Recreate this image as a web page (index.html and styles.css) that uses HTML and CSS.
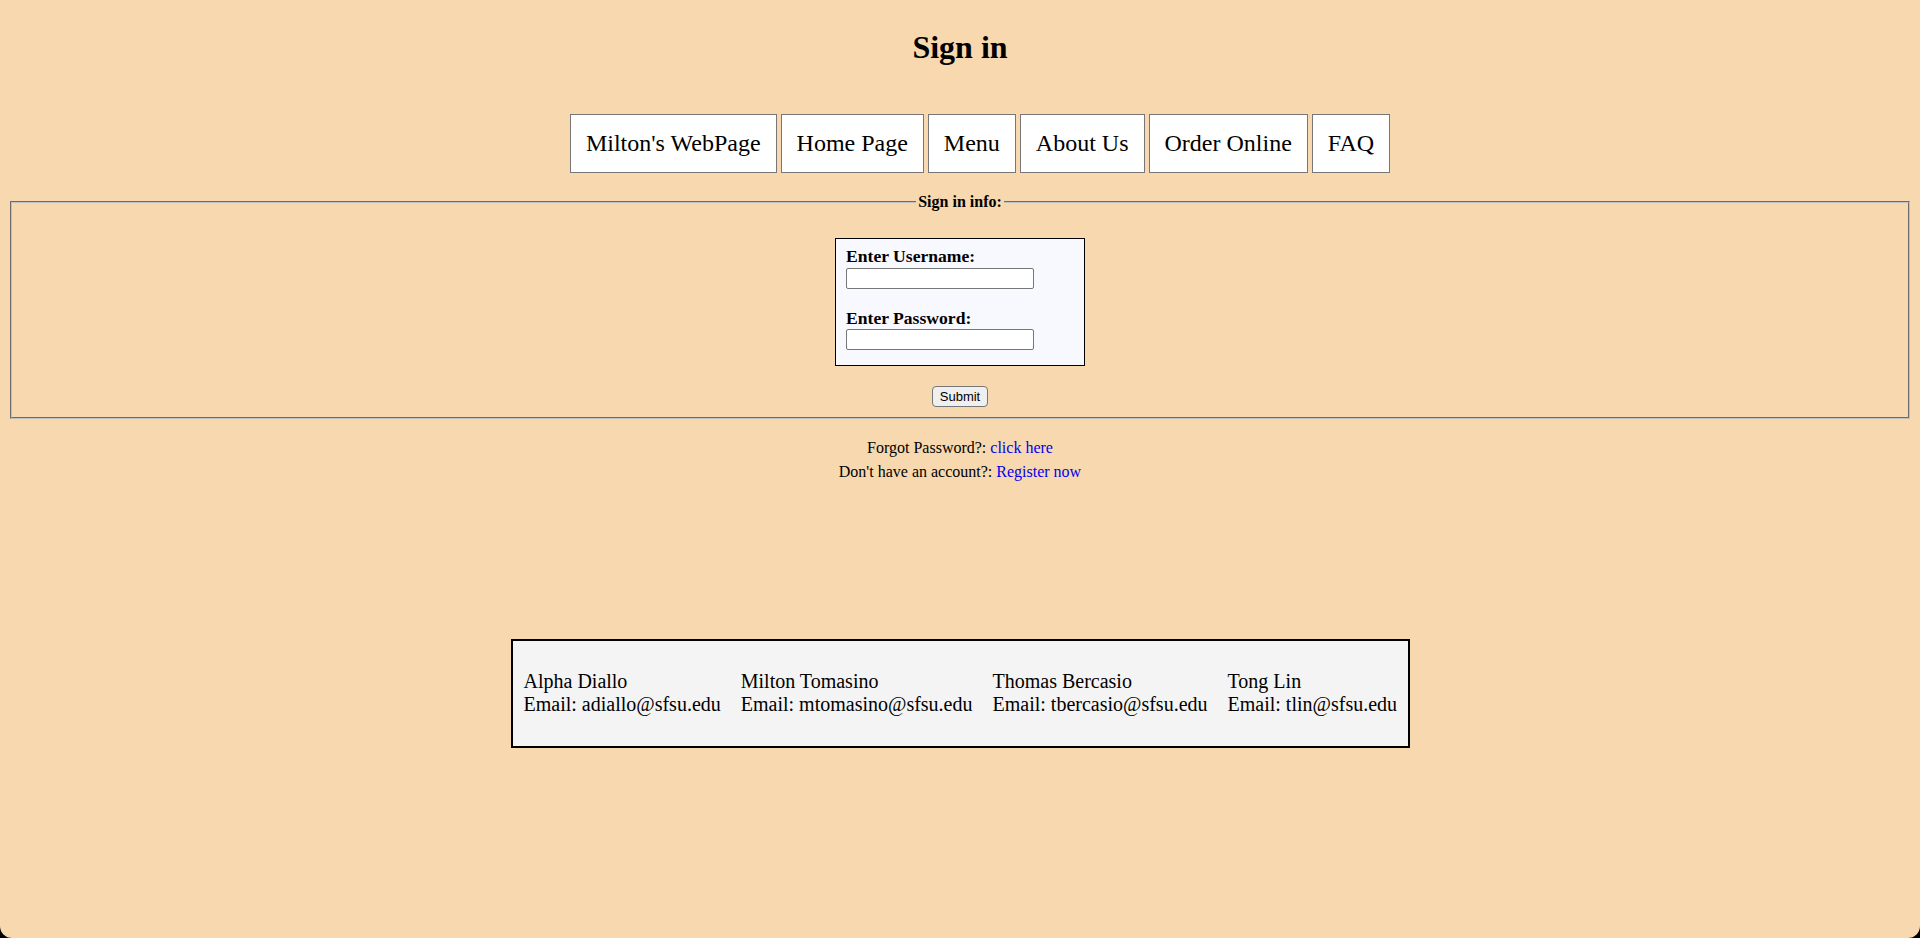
FILE: index.html
```html
<!DOCTYPE html>
<html lang="en">
<head>
<meta charset="utf-8">
<title>Sign in</title>
<link rel="stylesheet" href="styles.css">
</head>
<body>
<h1 class="title">Sign in</h1>
<ul class="nav">
  <li class="nav-item"><a class="nav-link" href="#">Milton's WebPage</a></li>
  <li class="nav-item"><a class="nav-link" href="#">Home Page</a></li>
  <li class="nav-item"><a class="nav-link" href="#">Menu</a></li>
  <li class="nav-item"><a class="nav-link" href="#">About Us</a></li>
  <li class="nav-item"><a class="nav-link" href="#">Order Online</a></li>
  <li class="nav-item"><a class="nav-link" href="#">FAQ</a></li>
</ul>
<form class="signin-form">
  <fieldset class="signin-fieldset">
    <legend class="signin-legend">Sign in info:</legend>
    <div class="signin-box">
      <label class="field-label" for="username">Enter Username:</label>
      <input class="field-input first" type="text" id="username">
      <label class="field-label second" for="password">Enter Password:</label>
      <input class="field-input last" type="password" id="password">
    </div>
    <div class="submit-row"><button class="submit-btn" type="submit">Submit</button></div>
  </fieldset>
</form>
<div class="links">
  <div class="link-line">Forgot Password?: <a class="link" href="#">click here</a></div>
  <div class="link-line">Don't have an account?: <a class="link" href="#">Register now</a></div>
</div>
<footer class="footer">
  <div class="member"><div>Alpha Diallo</div><div>Email: adiallo@sfsu.edu</div></div>
  <div class="member"><div>Milton Tomasino</div><div>Email: mtomasino@sfsu.edu</div></div>
  <div class="member"><div>Thomas Bercasio</div><div>Email: tbercasio@sfsu.edu</div></div>
  <div class="member"><div>Tong Lin</div><div>Email: tlin@sfsu.edu</div></div>
</footer>
</body>
</html>
```
FILE: styles.css
```css
html {
  background: #000;
  height: 100%;
}
body {
  margin: 0;
  padding: 8px;
  box-sizing: border-box;
  height: 938px;
  overflow: hidden;
  background: #f8d8ae;
  border-radius: 0 0 12px 12px;
  font-family: "Liberation Serif", "Times New Roman", serif;
  font-size: 16px;
  color: #000;
}
.title {
  margin: 21px 0 0;
  font-size: 32px;
  font-weight: bold;
  text-align: center;
}
.nav {
  list-style: none;
  margin: 48px 0 0;
  padding: 0 0 0 40px;
  display: flex;
  justify-content: center;
  gap: 4px;
}
.nav-item {
  background: #fff;
  border: 1px solid #777;
}
.nav-link {
  display: block;
  padding: 15px;
  font-size: 24px;
  color: #000;
  text-decoration: none;
}
.signin-form {
  margin: 0;
}
.signin-fieldset {
  margin: 20px 2px 0;
  padding: 5.6px 12px 10px;
  border: 2px groove #c0c0c0;
}
.signin-legend {
  font-weight: bold;
  padding: 0 2px;
  margin-inline: auto;
}
.signin-box {
  width: 228px;
  margin: 21px auto 0;
  padding: 8px 10px 15px;
  background: #f8f8ff;
  border: 1px solid #000;
  display: flex;
  flex-direction: column;
  align-items: flex-start;
}
.field-label {
  font-weight: bold;
  font-size: 17.6px;
  line-height: 18px;
}
.field-label.second {
  margin-top: 20px;
}
.field-input {
  box-sizing: border-box;
  width: 188px;
  height: 21px;
  margin: 0;
  padding: 1px 2px;
  border: 1px solid #767676;
  border-radius: 2px;
  background: #fff;
}
.field-input.first {
  margin-top: 3px;
}
.field-input.last {
  margin-top: 2px;
}
.submit-row {
  display: flex;
  justify-content: center;
  margin-top: 20px;
}
.submit-btn {
  box-sizing: border-box;
  height: 21px;
  padding: 0 7px;
  font-family: "Liberation Sans", Arial, sans-serif;
  font-size: 13px;
  color: #000;
  background: #efefef;
  border: 1px solid #767676;
  border-radius: 4px;
}
.links {
  margin-top: 17px;
  text-align: center;
  line-height: 24px;
}
.link {
  color: #0000ee;
  text-decoration: none;
}
.footer {
  width: 894px;
  margin: 155px auto 0;
  padding: 29px 0 30px 1px;
  box-sizing: content-box;
  background: #f4f4f4;
  border: 2px solid #000;
  display: flex;
  font-size: 20px;
  line-height: 23px;
}
.member {
  padding: 0 10px;
  white-space: nowrap;
}
```
